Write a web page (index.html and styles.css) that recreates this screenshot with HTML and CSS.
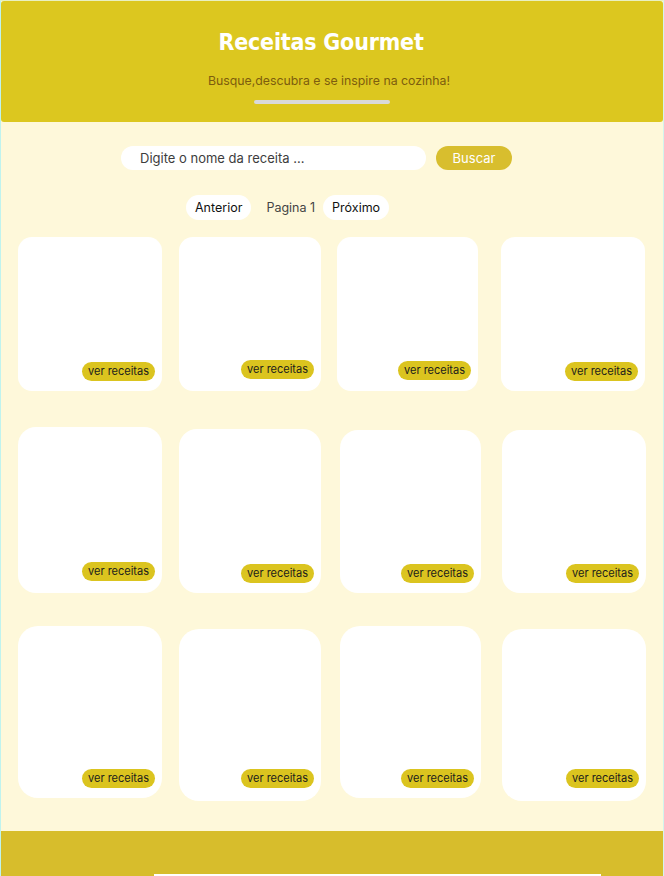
FILE: index.html
```html
<!DOCTYPE html>
<html lang="pt-BR">
<head>
<meta charset="utf-8">
<title>Receitas Gourmet</title>
<link rel="stylesheet" href="styles.css">
</head>
<body>
<div class="page">
  <header class="hero">
    <h1 class="title">Receitas Gourmet</h1>
    <p class="subtitle">Busque,descubra e se inspire na cozinha!</p>
    <div class="hero-bar"></div>
  </header>

  <main class="content">
    <form class="search">
      <input class="search-input" type="text" placeholder="Digite o nome da receita ...">
      <button class="search-btn" type="button">Buscar</button>
    </form>

    <nav class="pager">
      <button class="pager-btn" type="button">Anterior</button>
      <span class="pager-label">Pagina 1</span>
      <button class="pager-btn" type="button">Próximo</button>
    </nav>

    <section class="grid">
      <div class="row row-1">
        <div class="card c1"><span class="badge">ver receitas</span></div>
        <div class="card c2 b-up"><span class="badge">ver receitas</span></div>
        <div class="card c3 b-mid"><span class="badge">ver receitas</span></div>
        <div class="card c4"><span class="badge">ver receitas</span></div>
      </div>
      <div class="row row-2">
        <div class="card c1 b-up"><span class="badge">ver receitas</span></div>
        <div class="card c2 t2"><span class="badge">ver receitas</span></div>
        <div class="card c3 t3 x3"><span class="badge">ver receitas</span></div>
        <div class="card c4 t3"><span class="badge">ver receitas</span></div>
      </div>
      <div class="row row-3">
        <div class="card c1"><span class="badge">ver receitas</span></div>
        <div class="card c2 t3 b-high"><span class="badge">ver receitas</span></div>
        <div class="card c3 x3"><span class="badge">ver receitas</span></div>
        <div class="card c4 t3 b-high"><span class="badge">ver receitas</span></div>
      </div>
    </section>
  </main>

  <footer class="footer">
    <div class="footer-strip"></div>
  </footer>
</div>
</body>
</html>
```

FILE: styles.css
```css
* { box-sizing: border-box; }

html, body {
  margin: 0;
  padding: 0;
  background: #fef8da;
}

body {
  font-family: Inter, "Noto Sans", "Liberation Sans", sans-serif;
  color: #111;
}

.page {
  width: 664px;
  height: 876px;
  overflow: hidden;
  display: flex;
  flex-direction: column;
  background: #fef8da;
  border-left: 1px solid #bff3ee;
  border-right: 1px solid #d2f5ee;
  border-top: 1px solid #e9f0c0;
}

.hero {
  height: 121px;
  flex-shrink: 0;
  background: #dcc71f;
  border-radius: 3px;
  display: flex;
  flex-direction: column;
  align-items: center;
  padding-top: 26px;
}

.title {
  margin: 0;
  font-family: "DejaVu Sans Condensed", "DejaVu Sans", sans-serif;
  font-weight: 700;
  font-size: 23px;
  line-height: 30px;
  color: #ffffff;
  letter-spacing: -0.2px;
  padding-right: 22px;
}

.subtitle {
  margin: 16px 0 0;
  font-size: 12.3px;
  line-height: 15px;
  color: #7d5d0e;
  padding-right: 6px;
}

.hero-bar {
  width: 136px;
  height: 4px;
  margin-top: 12px;
  margin-right: 20px;
  border-radius: 2px;
  background: #d9d9d9;
}

.content {
  flex: 1;
  display: flex;
  flex-direction: column;
}

.search {
  display: flex;
  gap: 10px;
  margin: 24px 0 0;
  padding-left: 120px;
}

.search-input {
  width: 305px;
  height: 24px;
  border: none;
  outline: none;
  border-radius: 12px;
  background: #ffffff;
  padding: 0 0 0 19px;
  font-family: inherit;
  font-size: 13px;
  color: #333;
}

.search-input::placeholder {
  color: #3d3d3d;
}

.search-btn {
  width: 76px;
  height: 24px;
  border: none;
  border-radius: 12px;
  background: #d8be2e;
  color: #ffffff;
  font-family: inherit;
  font-size: 13px;
  padding: 0;
}

.pager {
  display: flex;
  align-items: center;
  margin-top: 25px;
  padding-left: 185px;
}

.pager-btn {
  height: 25px;
  border: none;
  border-radius: 13px;
  background: #ffffff;
  font-family: inherit;
  font-size: 12.5px;
  color: #111;
  padding: 0 9px;
}

.pager-label {
  font-size: 12.5px;
  color: #444;
  margin: 0 8px 0 15px;
}

.grid {
  display: flex;
  flex-direction: column;
  margin-top: 17px;
  padding-left: 17px;
}

.row {
  display: flex;
  align-items: flex-start;
}

.row-1 { height: 190px; }
.row-2 { height: 199px; }
.row-3 { height: 178px; }

.card {
  position: relative;
  background: #ffffff;
  border-radius: 14px;
  height: 154px;
}

.row-2 .card { height: 166px; border-radius: 18px; }
.row-3 .card { height: 172px; border-radius: 20px; }

.c1 { width: 144px; }
.c2 { width: 142px; margin-left: 17px; }
.c3 { width: 141px; margin-left: 16px; }
.c4 { width: 144px; margin-left: 23px; }

.x3 { margin-left: 19px; }
.x3 + .c4 { margin-left: 21px; }

.row-2 .t2 { margin-top: 2px; height: 164px; }
.row-2 .t3 { margin-top: 3px; height: 163px; }
.row-3 .t3 { margin-top: 3px; }

.badge {
  position: absolute;
  right: 7px;
  bottom: 10px;
  height: 19px;
  padding: 0 6px;
  border-radius: 10px;
  background: #dbc41f;
  font-size: 11px;
  line-height: 19px;
  color: #1c1c1c;
  white-space: nowrap;
}

.b-up .badge { bottom: 12px; }
.b-mid .badge { bottom: 11px; }
.b-high .badge { bottom: 13px; }

.footer {
  height: 45px;
  flex-shrink: 0;
  background: #d7bd2c;
  display: flex;
  flex-direction: column;
  justify-content: flex-end;
}

.footer-strip {
  height: 2px;
  margin: 0 62px 0 153px;
  background: #ffffff;
}
```
